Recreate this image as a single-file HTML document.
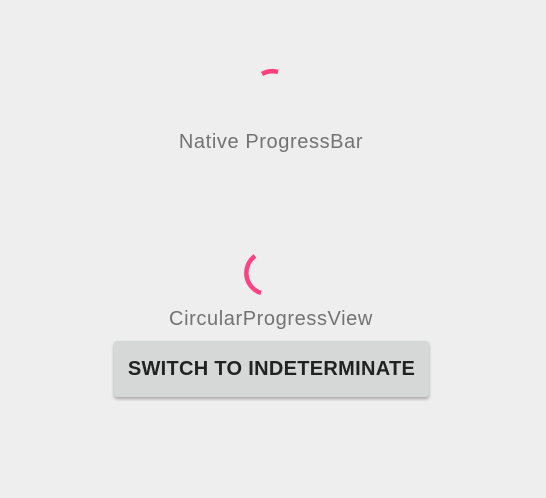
<!DOCTYPE html>
<html><head><style>
body{margin:0;width:546px;height:498px;background:#eeeeee;font-family:"Liberation Sans",sans-serif;position:relative;overflow:hidden}
.t{position:absolute;left:0;width:542px;text-align:center;color:#737373;font-size:20px;letter-spacing:0.6px}
.btn{position:absolute;left:114px;top:341px;width:315px;height:56px;background:#d6d7d7;border-radius:3px;box-shadow:0 2px 3px rgba(0,0,0,.3);color:#222;font-size:20px;font-weight:bold;display:flex;align-items:center;justify-content:center;letter-spacing:0.3px}
</style></head><body>
<svg width="546" height="498" style="position:absolute;left:0;top:0">
<path d="M262 74 A21 21 0 0 1 278 72" fill="none" stroke="#ff4081" stroke-width="4.5"/>
<path d="M255 256 A21 21 0 0 0 261 293" fill="none" stroke="#ff4081" stroke-width="4.5"/>
</svg>
<div class="t" style="top:131px">Native ProgressBar</div>
<div class="t" style="top:308px">CircularProgressView</div>
<div class="btn">SWITCH TO INDETERMINATE</div>
</body></html>
